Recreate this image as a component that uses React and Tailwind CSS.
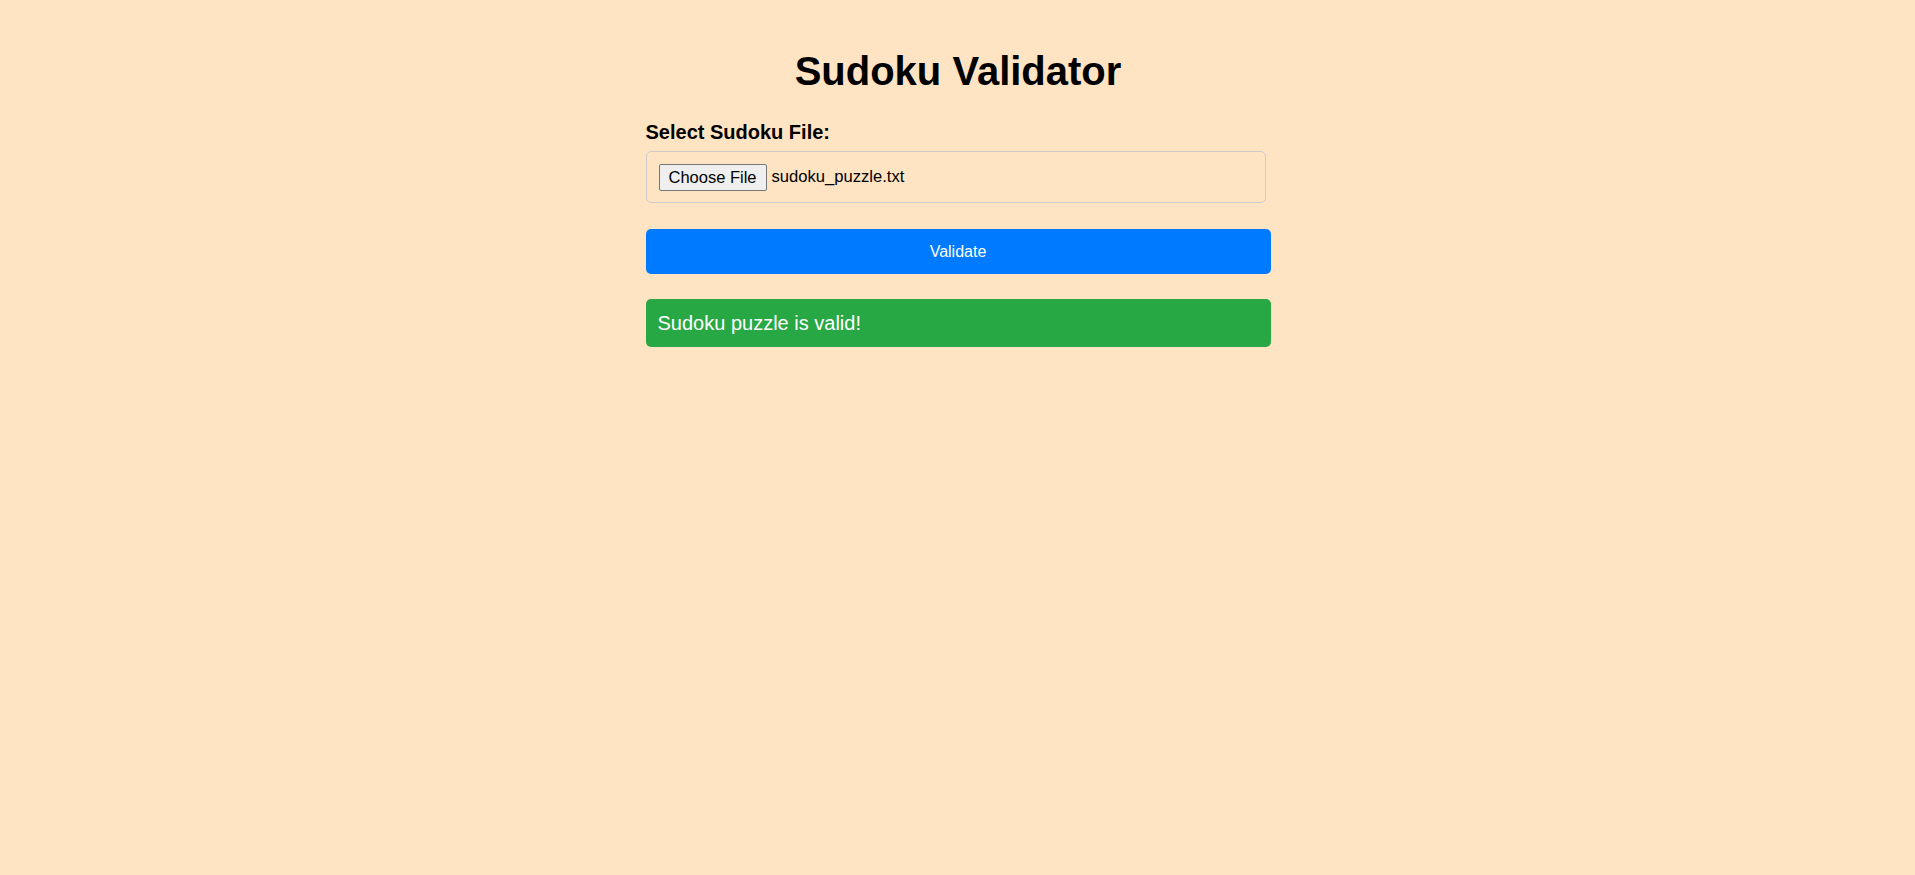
import React from "react";

export default function App() {
  return (
    <div className="min-h-screen bg-[#ffe4c4] text-black pl-px" style={{ fontFamily: '"Liberation Sans", Arial, sans-serif' }}>
      <div className="w-[625px] mx-auto pt-[48px]">
        <h1 className="text-[40px] font-bold leading-[46px] text-center">Sudoku Validator</h1>
        <label className="block mt-[27px] text-[20px] font-bold leading-[23px]">Select Sudoku File:</label>
        <div className="mt-[7px] w-[620px] h-[52px] flex items-center border border-[#cccccc] rounded-[5px] pl-[12px]">
          <span className="h-[27px] flex items-center px-[9px] bg-[#efefef] border border-[#767676] rounded-[2px] text-[16.5px] leading-none text-black">
            Choose File
          </span>
          <span className="ml-[5px] text-[16.6px] leading-none">sudoku_puzzle.txt</span>
        </div>
        <button className="mt-[26px] w-full h-[45px] bg-[#007bff] text-white text-[16px] rounded-[5px] flex items-center justify-center">
          Validate
        </button>
        <div className="mt-[25px] w-full h-[48px] bg-[#28a745] text-white text-[20px] rounded-[5px] flex items-center px-[12px]">
          Sudoku puzzle is valid!
        </div>
      </div>
    </div>
  );
}
